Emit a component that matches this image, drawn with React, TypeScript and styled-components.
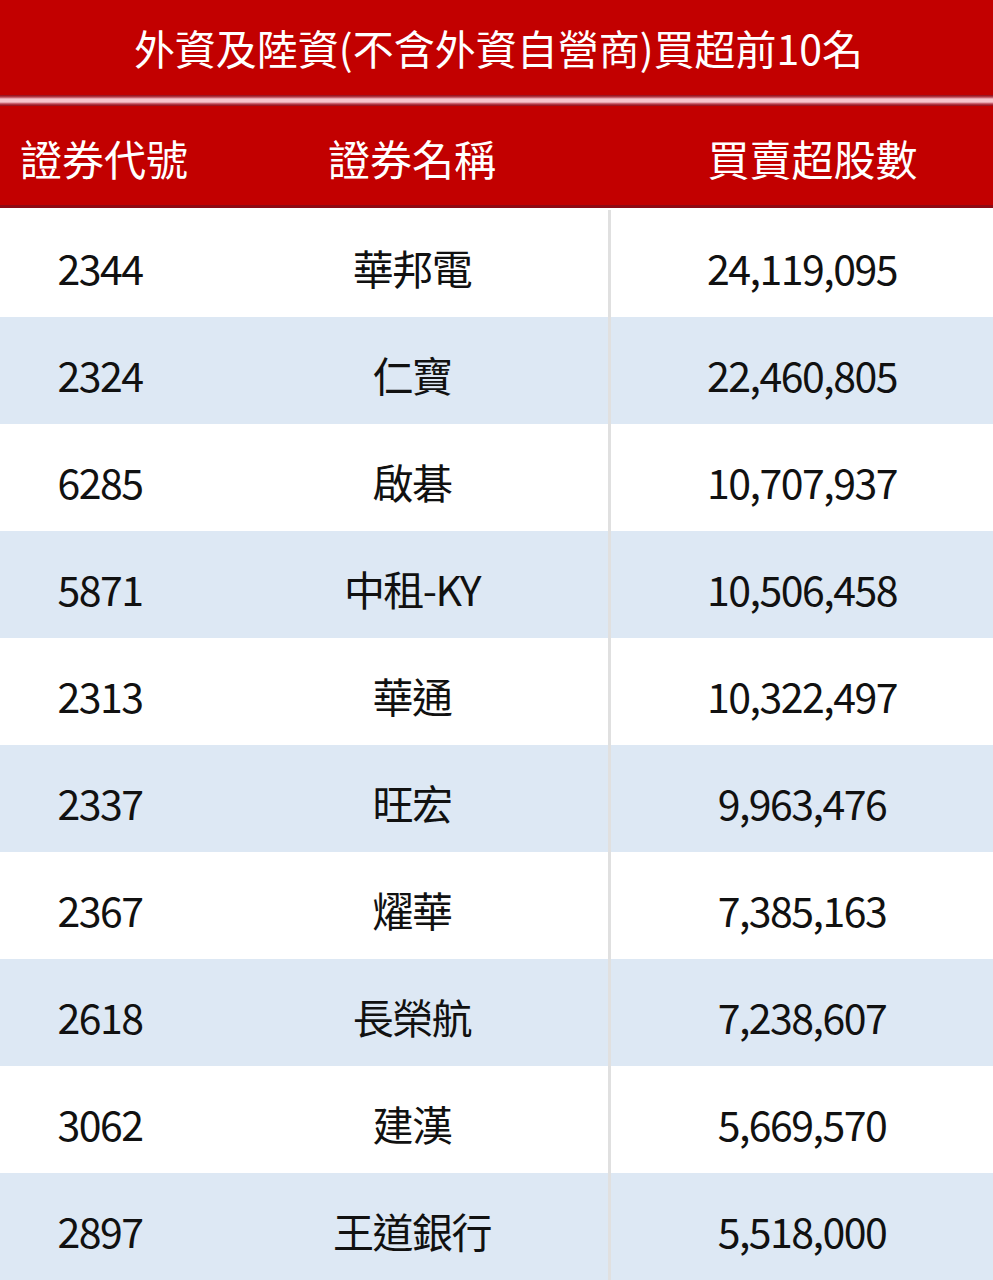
import React from "react";
import styled, { createGlobalStyle } from "styled-components";

type Row = {
  code: string;
  name: string;
  shares: string;
};

const rows: Row[] = [
  { code: "2344", name: "華邦電", shares: "24,119,095" },
  { code: "2324", name: "仁寶", shares: "22,460,805" },
  { code: "6285", name: "啟碁", shares: "10,707,937" },
  { code: "5871", name: "中租-KY", shares: "10,506,458" },
  { code: "2313", name: "華通", shares: "10,322,497" },
  { code: "2337", name: "旺宏", shares: "9,963,476" },
  { code: "2367", name: "燿華", shares: "7,385,163" },
  { code: "2618", name: "長榮航", shares: "7,238,607" },
  { code: "3062", name: "建漢", shares: "5,669,570" },
  { code: "2897", name: "王道銀行", shares: "5,518,000" },
];

const GlobalStyle = createGlobalStyle`
  html, body {
    margin: 0;
    padding: 0;
    background: #ffffff;
  }
  body {
    font-family: "Noto Sans CJK TC", "Noto Sans", sans-serif;
  }
`;

const Table = styled.div`
  width: 993px;
  display: flex;
  flex-direction: column;
`;

const Title = styled.div`
  height: 95px;
  background: #c20000;
  color: #ffffff;
  font-size: 41px;
  line-height: 95px;
  text-align: center;
  padding-left: 4px;
`;

const Separator = styled.div`
  height: 11px;
  background: linear-gradient(
    to bottom,
    #8e0a14 0px,
    #b8404e 2px,
    #f6c4cc 4px,
    #f6c4cc 7px,
    #b8404e 9px,
    #8e0a14 11px
  );
`;

const HeaderRow = styled.div`
  height: 102px;
  background: #c20000;
  border-bottom: 3px solid #8e0a14;
  display: grid;
  grid-template-columns: 208px 408px 1fr;
  align-items: center;
  color: #ffffff;
  font-size: 42px;
  padding-top: 4px;
  box-sizing: border-box;
`;

const HeaderCell = styled.div<{ $shift?: number }>`
  text-align: center;
  padding-left: ${(p) => p.$shift ?? 0}px;
`;

const DataRow = styled.div<{ $striped: boolean }>`
  height: 107px;
  background: ${(p) => (p.$striped ? "#dde8f4" : "#ffffff")};
  display: grid;
  grid-template-columns: 200px 408px 1fr;
  align-items: stretch;
  color: #111111;
  font-size: 41px;
  &:first-of-type {
    margin-top: 2px;
  }
`;

const Cell = styled.div<{ $divider?: boolean; $shift?: number }>`
  display: flex;
  align-items: center;
  justify-content: center;
  padding-top: 6px;
  padding-left: ${(p) => p.$shift ?? 0}px;
  letter-spacing: -1.5px;
  border-left: ${(p) => (p.$divider ? "3px solid #e0e0e0" : "none")};
`;

export default function App() {
  return (
    <>
      <GlobalStyle />
      <Table>
        <Title>外資及陸資(不含外資自營商)買超前10名</Title>
        <Separator />
        <HeaderRow>
          <HeaderCell>證券代號</HeaderCell>
          <HeaderCell $shift={-10}>證券名稱</HeaderCell>
          <HeaderCell $shift={16}>買賣超股數</HeaderCell>
        </HeaderRow>
        <div>
          {rows.map((r, i) => (
            <DataRow key={r.code} $striped={i % 2 === 1}>
              <Cell>{r.code}</Cell>
              <Cell $shift={16}>{r.name}</Cell>
              <Cell $divider>{r.shares}</Cell>
            </DataRow>
          ))}
        </div>
      </Table>
    </>
  );
}
